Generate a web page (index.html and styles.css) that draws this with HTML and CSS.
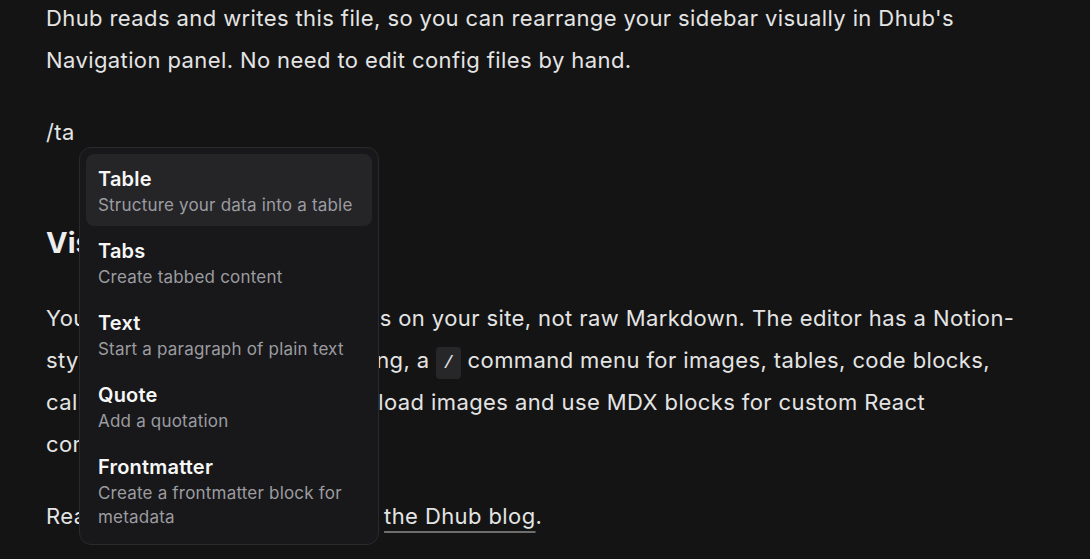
FILE: index.html
```html
<!DOCTYPE html>
<html lang="en">
<head>
    <meta charset="UTF-8">
    <meta name="viewport" content="width=device-width, initial-scale=1.0">
    <title>Dhub editor</title>
    <link rel="stylesheet" href="styles.css">
</head>
<body>
    <div class="editor">
        <p class="first">Dhub reads and writes this file, so you can rearrange your sidebar visually in Dhub's Navigation panel. No need to edit config files by hand.</p>

        <p class="slash">/ta</p>

        <h2>Visual editing</h2>

        <p>You edit your content as it looks on your site, not raw Markdown. The editor has a Notion-style editor with smart formatting, a <code>/</code> command menu for images, tables, code blocks, callouts, and more. You can upload images and use MDX blocks for custom React components.</p>

        <p>Read more about this editor on <a href="#">the Dhub blog</a>.</p>

        <div class="menu">
            <div class="item active">
                <div class="title">Table</div>
                <div class="desc">Structure your data into a table</div>
            </div>
            <div class="item">
                <div class="title">Tabs</div>
                <div class="desc">Create tabbed content</div>
            </div>
            <div class="item">
                <div class="title">Text</div>
                <div class="desc">Start a paragraph of plain text</div>
            </div>
            <div class="item">
                <div class="title">Quote</div>
                <div class="desc">Add a quotation</div>
            </div>
            <div class="item">
                <div class="title">Frontmatter</div>
                <div class="desc">Create a frontmatter block for metadata</div>
            </div>
        </div>
    </div>
</body>
</html>
```

FILE: styles.css
```css
body {
    margin: 0;
    background: #141414;
    color: #e4e4e4;
    font-family: Inter, 'Noto Sans', sans-serif;
    overflow: hidden;
}

.editor {
    position: relative;
    width: 990px;
    padding-left: 46px;
    font-size: 22px;
    letter-spacing: 0.4px;
    line-height: 42px;
}

p {
    margin: 0 0 30px;
}

.first {
    margin-top: -3px;
}

h2 {
    font-size: 29px;
    line-height: 35px;
    font-weight: 700;
    letter-spacing: 0;
    margin: 72px 0 37px;
    color: #ededed;
}

code {
    font-family: 'Liberation Mono', monospace;
    font-size: 18px;
    line-height: 1;
    letter-spacing: 0;
    background: #27272a;
    border-radius: 4px;
    padding: 6px 7px;
}

a {
    color: #e4e4e4;
    text-decoration: underline;
    text-decoration-color: #6e6e6e;
    text-decoration-thickness: 2px;
    text-underline-offset: 7px;
}

.menu {
    position: absolute;
    left: 79px;
    top: 150px;
    width: 286px;
    padding: 6px;
    background: #18181a;
    border: 1px solid #2a2a2d;
    border-radius: 12px;
    letter-spacing: 0.2px;
}

.item {
    padding: 11px 12px 9px;
    border-radius: 8px;
}

.item.active {
    background: #252528;
}

.title {
    font-size: 20px;
    line-height: 28px;
    font-weight: 600;
    color: #f7f7f7;
}

.desc {
    font-size: 17px;
    line-height: 24px;
    color: #9c9ca0;
}
```
